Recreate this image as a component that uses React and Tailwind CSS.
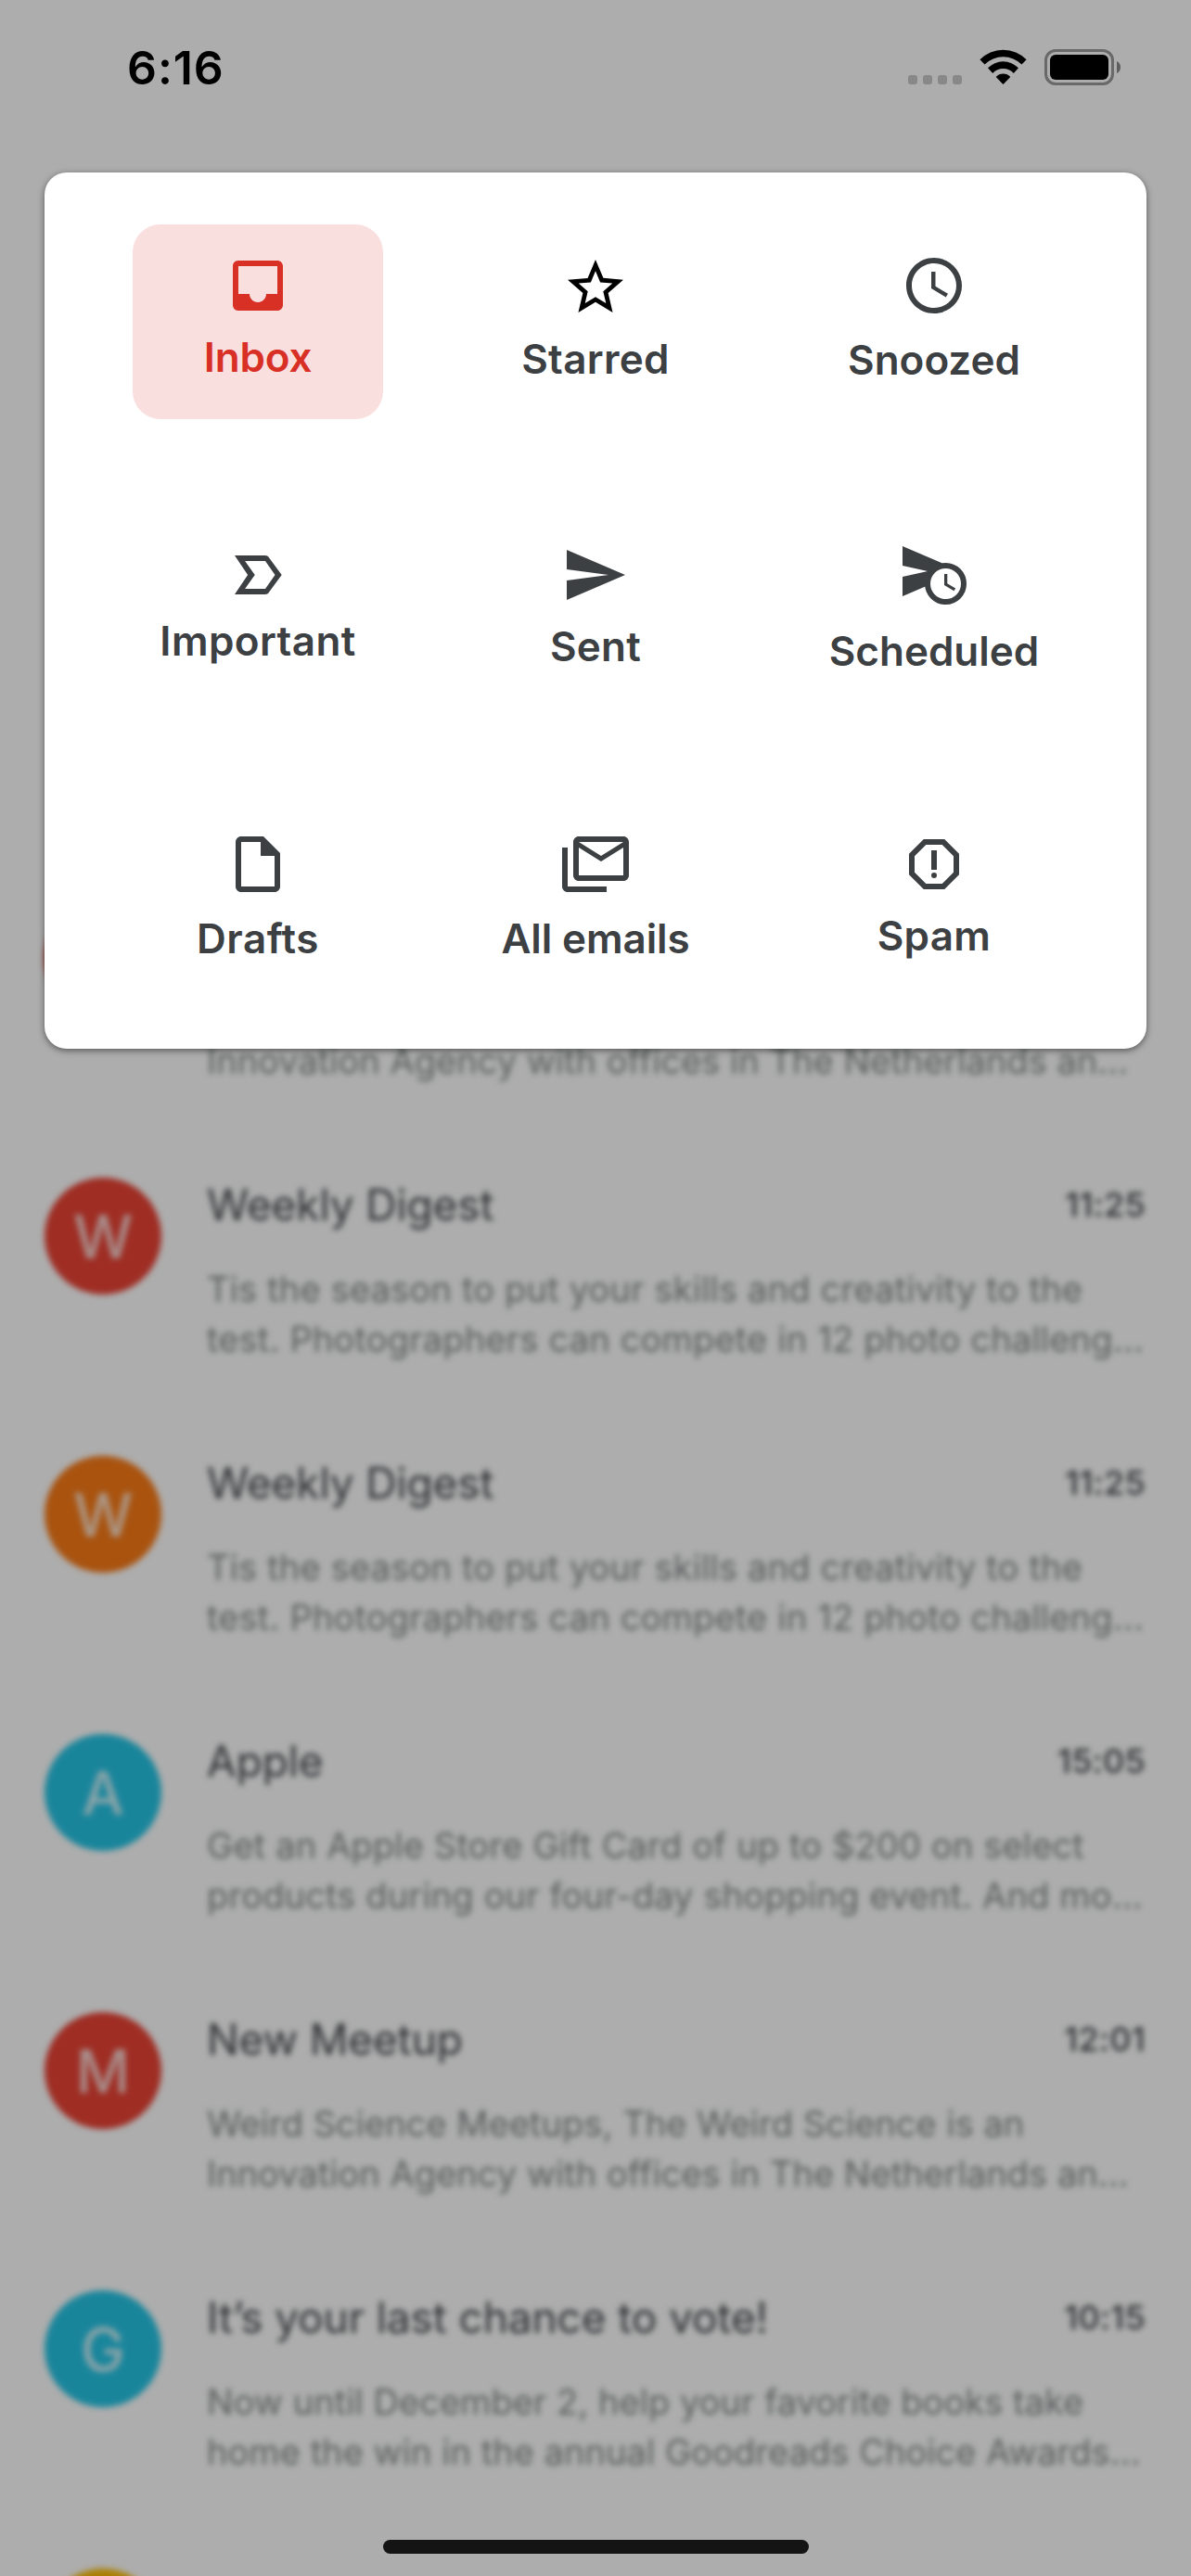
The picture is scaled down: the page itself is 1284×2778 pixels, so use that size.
import React from "react";

const FOLDERS = [
  {
    label: "Inbox",
    active: true,
    tracking: "tracking-[-0.2px]",
    icon: (
      <svg viewBox="3 3 18 18" className="h-[54px] w-[54px]" fill="currentColor">
        <path d="M19 3H4.99C3.88 3 3.01 3.89 3.01 5L3 19c0 1.1.88 2 1.99 2H19c1.1 0 2-.9 2-2V5c0-1.11-.9-2-2-2zm0 12h-4c0 1.66-1.35 3-3 3s-3-1.34-3-3H4.99V5H19v10z" />
      </svg>
    ),
  },
  {
    label: "Starred",
    tracking: "tracking-[0.3px]",
    icon: (
      <svg viewBox="2 2 20 19" className="h-[57px] w-[60px] text-black" fill="currentColor">
        <path d="M22 9.24l-7.19-.62L12 2 9.19 8.63 2 9.24l5.46 4.73L5.82 21 12 17.27 18.18 21l-1.63-7.03L22 9.24zM12 15.4l-3.76 2.27 1-4.28-3.32-2.88 4.38-.38L12 6.1l1.71 4.04 4.38.38-3.32 2.88 1 4.28L12 15.4z" />
      </svg>
    ),
  },
  {
    label: "Snoozed",
    tracking: "tracking-normal",
    icon: (
      <svg viewBox="2 2 20 20" className="h-[60px] w-[60px]" fill="currentColor">
        <path d="M11.99 2C6.47 2 2 6.48 2 12s4.47 10 9.99 10C17.52 22 22 17.52 22 12S17.52 2 11.99 2zM12 20c-4.42 0-8-3.58-8-8s3.58-8 8-8 8 3.58 8 8-3.58 8-8 8zm.5-13H11v6l5.25 3.15.75-1.23-4.5-2.67V7z" />
      </svg>
    ),
  },
  {
    label: "Important",
    tracking: "tracking-[0.4px]",
    icon: (
      <svg viewBox="0 0 17 14" className="h-[42px] w-[51px]" fill="currentColor" fillRule="evenodd">
        <path d="M0 0H10.9c.65 0 1.1.28 1.4.75L16.9 7l-4.6 6.25c-.3.47-.75.75-1.4.75H0L4.7 7 0 0zM3.7 2l3.55 5L3.7 12h7.3l3.5-5L11 2H3.7z" />
      </svg>
    ),
  },
  {
    label: "Sent",
    tracking: "tracking-[0.2px]",
    icon: (
      <svg viewBox="2 3 21 18" className="h-[54px] w-[63px]" fill="currentColor">
        <path d="M2.01 21L23 12 2.01 3 2 10l15 2-15 2z" />
      </svg>
    ),
  },
  {
    label: "Scheduled",
    tracking: "tracking-normal",
    icon: (
      <svg viewBox="0 0 23 21" className="h-[63px] w-[69px]" fill="currentColor">
        <path d="M0 0l14.2 6.1-5.8 8.3L0 18v-7l9-2-9-2V0z" />
        <circle cx="15.5" cy="13.5" r="6.5" fill="#fff" stroke="currentColor" strokeWidth="2" />
        <path d="M16.1 10H15v4l3.5 2.1.55-.9-2.95-1.75V10z" />
      </svg>
    ),
  },
  {
    label: "Drafts",
    tracking: "tracking-[0.5px]",
    icon: (
      <svg viewBox="4 2 16 20" className="h-[60px] w-[48px]" fill="currentColor">
        <path d="M14 2H6c-1.1 0-1.99.9-1.99 2L4 20c0 1.1.89 2 1.99 2H18c1.1 0 2-.9 2-2V8l-6-6zM6 20V4h7v5h5v11H6z" />
      </svg>
    ),
  },
  {
    label: "All emails",
    tracking: "tracking-[-0.1px]",
    icon: (
      <svg viewBox="0 0 24 20" className="h-[60px] w-[72px]" fill="currentColor">
        <path d="M24 2c0-1.1-.9-2-2-2H6C4.900 0 4 .9 4 2v12c0 1.1.9 2 2 2h16c1.1 0 2-.9 2-2V2zm-2 0l-8 5-8-5h16zm0 12H6V4l8 5 8-5v10z" />
        <path d="M0 4v14c0 1.1.9 2 2 2h14v-2H2V4z" />
      </svg>
    ),
  },
  {
    label: "Spam",
    tracking: "tracking-[0.3px]",
    icon: (
      <svg viewBox="3 3 18 18" className="h-[54px] w-[54px]" fill="currentColor">
        <path d="M15.73 3H8.27L3 8.27v7.46L8.27 21h7.46L21 15.73V8.27L15.73 3zM19 14.9L14.9 19H9.1L5 14.9V9.1L9.1 5h5.8L19 9.1v5.8z" />
        <circle cx="12" cy="16" r="1" />
        <path d="M11 7h2v7h-2z" />
      </svg>
    ),
  },
];

const DIGEST = ["Tis the season to put your skills and creativity to the", "test. Photographers can compete in 12 photo challeng..."];

const EMAILS = [
  {
    initial: "",
    color: "bg-[#ea4335]",
    name: "",
    time: "",
    tracking: "tracking-[0.02px]",
    lines: ["\u00a0", "Innovation Agency with offices in The Netherlands an..."],
  },
  { initial: "W", color: "bg-[#ea4335]", name: "Weekly Digest", time: "11:25", tracking: "tracking-[0.19px]", lines: DIGEST },
  { initial: "W", color: "bg-[#fa7b17]", name: "Weekly Digest", time: "11:25", tracking: "tracking-[0.19px]", lines: DIGEST },
  {
    initial: "A",
    color: "bg-[#26c5e5]",
    name: "Apple",
    time: "15:05",
    tracking: "tracking-[0.15px]",
    lines: ["Get an Apple Store Gift Card of up to $200 on select", "products during our four-day shopping event. And mo..."],
  },
  {
    initial: "M",
    color: "bg-[#ea4335]",
    name: "New Meetup",
    time: "12:01",
    tracking: "tracking-[0.03px]",
    lines: ["Weird Science Meetups, The Weird Science is an", "Innovation Agency with offices in The Netherlands an..."],
  },
  {
    initial: "G",
    color: "bg-[#26c5e5]",
    name: "It’s your last chance to vote!",
    time: "10:15",
    tracking: "tracking-[0.05px]",
    lines: ["Now until December 2, help your favorite books take", "home the win in the annual Goodreads Choice Awards..."],
  },
  { initial: "", color: "bg-[#fbbc04]", name: "", time: "", tracking: "tracking-normal", lines: [] },
];

function StatusBar() {
  return (
    <header className="flex h-[186px] items-start justify-between pt-[43px] pr-[76px] pl-[137px]">
      <time className="text-[50px] leading-[60px] font-semibold tracking-[0.9px] text-black">6:16</time>
      <div className="flex items-center pt-[10px]">
        <div className="mt-[27px] mr-[19px] flex gap-[6px]">
          {[0, 1, 2, 3].map((dot) => (
            <span key={dot} className="h-[10px] w-[10px] rounded-[3px] bg-[#888888]" />
          ))}
        </div>
        <svg viewBox="0 0 51 39" className="mr-[19px] h-[39px] w-[51px]" fill="#000">
          <path d="M.4 11.3A35 35 0 0 1 50.600 11.3L45.500 16.500A28.500 28.500 0 0 0 5.500 16.500Z" />
          <path d="M9 20.300A23 23 0 0 1 42 20.300L36.800 25.900A15.500 15.500 0 0 0 14.200 25.900Z" />
          <path d="M17.700 29.900A10.500 10.500 0 0 1 33.300 29.900L25.500 38Z" />
        </svg>
        <div className="flex items-center gap-[3px]">
          <div className="h-[39px] w-[75px] rounded-[12px] border-[3px] border-[#696969] p-[3px]">
            <div className="h-full w-full rounded-[6px] bg-black" />
          </div>
          <svg viewBox="0 0 4 13" className="h-[13px] w-[4px]" fill="#5e5e5e">
            <path d="M0 0C2.500 1 4 3.500 4 6.500S2.500 12 0 13Z" />
          </svg>
        </div>
      </div>
    </header>
  );
}

function FolderTile({ folder }) {
  return (
    <button
      type="button"
      className={
        folder.active
          ? "flex h-[210px] w-[270px] flex-col items-center justify-center gap-[23px] rounded-[30px] bg-[#fadfdf] text-[#d93025]"
          : "flex h-[210px] w-[270px] flex-col items-center justify-center gap-[23px] text-[#3c4043]"
      }
    >
      {folder.icon}
      <span className={`text-[44px] leading-[55px] font-semibold whitespace-nowrap ${folder.tracking}`}>{folder.label}</span>
    </button>
  );
}

function EmailRow({ email }) {
  return (
    <article className="flex h-[300px] shrink-0 items-start gap-[49px]">
      <div
        className={`flex h-[126px] w-[126px] shrink-0 items-center justify-center rounded-full pt-[2px] text-[64px] leading-none font-medium text-white/75 ${email.color}`}
      >
        {email.initial}
      </div>
      <div className="min-w-0 flex-1">
        <div className="flex items-start justify-between pt-[1px]">
          <h2 className="min-h-[57px] text-[46px] leading-[57px] tracking-[-0.1px] text-[#45494d]">{email.name}</h2>
          <time className="pt-[6px] text-[36px] leading-[44px] font-medium tracking-[0.3px] text-[#45494d]">{email.time}</time>
        </div>
        <div className={`mt-[35px] text-[38px] leading-[54px] whitespace-nowrap text-[#848c8b] ${email.tracking}`}>
          {email.lines.map((line) => (
            <p key={line}>{line}</p>
          ))}
        </div>
      </div>
    </article>
  );
}

export default function App() {
  return (
    <div className="relative h-[2778px] w-[1284px] overflow-hidden bg-white font-['Inter',sans-serif]">
      <main className="flex h-full flex-col pt-[970px] pr-[49px] pl-[48px] blur-[3px]">
        {EMAILS.map((email, index) => (
          <EmailRow key={index} email={email} />
        ))}
      </main>

      <div className="absolute inset-0 flex flex-col bg-black/32">
        <StatusBar />
        <nav className="mx-[48px] grid h-[945px] grid-cols-[270px_270px_272px] content-start justify-items-center gap-x-[94px] gap-y-[102px] rounded-[24px] bg-white pt-[56px] pl-[95px] shadow-[0_2px_7px_rgba(0,0,0,0.5)]">
          {FOLDERS.map((folder) => (
            <FolderTile key={folder.label} folder={folder} />
          ))}
        </nav>
        <div className="mx-auto mt-auto mb-[24px] h-[15px] w-[459px] rounded-full bg-[#141414]" />
      </div>
    </div>
  );
}
